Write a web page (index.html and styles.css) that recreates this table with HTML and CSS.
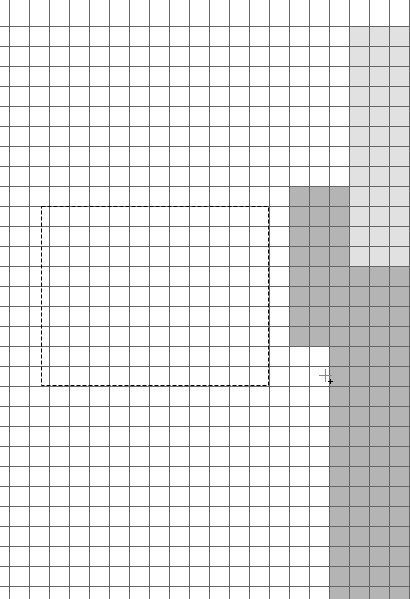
FILE: index.html
```html
<!DOCTYPE html>
<html>
<head>
<meta charset="utf-8">
<link rel="stylesheet" href="styles.css">
</head>
<body>
<div class="canvas">
  <div class="fill dark d1"></div>
  <div class="fill dark d2"></div>
  <div class="fill light l1"></div>
  <div class="fill dark d3"></div>
  <div class="hlines"></div>
  <div class="vlines"></div>
  <svg class="marquee" width="230" height="182" viewBox="0 0 230 182">
    <rect x="0.5" y="0.5" width="227" height="179" fill="none" stroke="#000" stroke-width="1" stroke-dasharray="4 2"/>
  </svg>
  <svg class="cursor" width="20" height="20" viewBox="0 0 20 20">
    <path d="M7.5 0v13M1 6.5h13" stroke="#8a8a8a" stroke-width="1" fill="none"/>
    <path d="M12.5 10v5M10 12.5h5" stroke="#000" stroke-width="1" fill="none"/>
  </svg>
</div>
</body>
</html>
```
FILE: styles.css
```css
html, body {
  margin: 0;
  padding: 0;
  background: #fff;
}
.canvas {
  position: relative;
  width: 410px;
  height: 599px;
  overflow: hidden;
  background: #fff;
}
.fill {
  position: absolute;
}
.dark { background: #b4b4b4; }
.light { background: #e1e1e1; }
.d1 { left: 289px; top: 186px; width: 40px; height: 160px; }
.d2 { left: 329px; top: 186px; width: 20px; height: 413px; }
.l1 { left: 349px; top: 26px; width: 61px; height: 240px; }
.d3 { left: 349px; top: 266px; width: 61px; height: 333px; }
.vlines {
  position: absolute;
  inset: 0;
  background-image: linear-gradient(to right, #666 1px, transparent 1px);
  background-size: 20px 100%;
  background-position: 9px 0;
}
.hlines {
  position: absolute;
  left: 0;
  right: 0;
  top: 26px;
  bottom: 0;
  background-image: linear-gradient(to bottom, #666 1px, transparent 1px);
  background-size: 100% 20px;
  background-position: 0 0;
}
.marquee {
  position: absolute;
  left: 41px;
  top: 206px;
}
.cursor {
  position: absolute;
  left: 318px;
  top: 369px;
}
```
